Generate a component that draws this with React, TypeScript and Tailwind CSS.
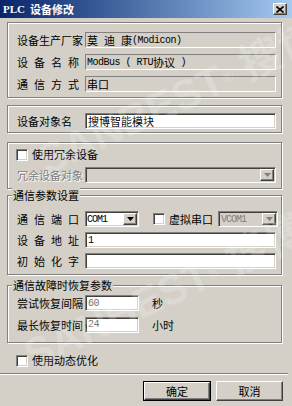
import React from "react";

const sunken =
  "border border-t-[#808080] border-l-[#808080] border-b-white border-r-white shadow-[inset_1px_1px_0_#404040,inset_-1px_-1px_0_#d4d0c8]";
const raised =
  "border border-t-white border-l-white border-b-[#404040] border-r-[#404040] shadow-[inset_-1px_-1px_0_#808080,inset_1px_1px_0_#d4d0c8] bg-[#d4d0c8]";
const mono = "font-['Liberation_Mono',monospace] text-[10px] tracking-[-0.5px]";

function Group({
  className,
  legend,
  children,
}: {
  className: string;
  legend?: string;
  children: React.ReactNode;
}) {
  return (
    <div
      className={`relative ml-[7px] w-[275px] border border-[#808080] shadow-[inset_1px_1px_0_#fff,1px_1px_0_#fff] ${className}`}
    >
      {legend && (
        <span className="absolute left-[4px] top-[-8px] bg-[#d4d0c8] px-[1px] leading-[14px]">
          {legend}
        </span>
      )}
      {children}
    </div>
  );
}

function Spaced({ text }: { text: string }) {
  return (
    <div className="flex w-[62px] justify-between leading-[16px]">
      {text.split("").map((c, i) => (
        <span key={i}>{c}</span>
      ))}
    </div>
  );
}

function Arrow({ disabled }: { disabled?: boolean }) {
  return (
    <div className={`flex h-[12px] w-[14px] items-center justify-center ${raised}`}>
      <svg width="7" height="4" viewBox="0 0 7 4">
        <path d="M0 0H7L3.5 4Z" fill={disabled ? "#808080" : "#000"} />
      </svg>
    </div>
  );
}

function Check({ className }: { className?: string }) {
  return <div className={`h-[12px] w-[12px] bg-white ${sunken} ${className ?? ""}`} />;
}

export default function App() {
  return (
    <div className="relative h-[406px] w-[292px] overflow-hidden bg-[#d4d0c8] font-['Noto_Sans_CJK_SC',sans-serif] text-[11px] text-black">
      {/* title bar */}
      <div className="flex h-[18px] items-center justify-between bg-gradient-to-r from-[#0a246a] to-[#a6caf0] pl-[3px] pr-[5px]">
        <div className="flex items-center font-bold text-white leading-[14px]">
          <span className="font-['Liberation_Serif',serif] text-[11px]">PLC</span>
          <span className="ml-[5px] text-[11px]">设备修改</span>
        </div>
        <div className={`flex h-[12px] w-[14px] items-center justify-center ${raised}`}>
          <svg width="8" height="7" viewBox="0 0 8 7">
            <path d="M0.5 0.5L7.5 6.5M7.5 0.5L0.5 6.5" stroke="#000" strokeWidth="1.7" />
          </svg>
        </div>
      </div>

      {/* group 1 */}
      <Group className="mt-[4px] h-[76px] pl-[9px] pt-[9px]">
        <div className="flex flex-col gap-[6px]">
          <div className="flex items-center">
            <span className="w-[68px] leading-[16px]">设备生产厂家</span>
            <div className="flex h-[16px] w-[191px] items-center border border-t-[#808080] border-l-[#808080] border-b-white border-r-white pl-[1px]">
              <span className="tracking-[6px]">莫迪</span>
              <span>康</span>
              <span className={mono}>(Modicon)</span>
            </div>
          </div>
          <div className="flex items-center">
            <div className="w-[68px]">
              <Spaced text="设备名称" />
            </div>
            <div className="flex h-[16px] w-[191px] items-center border border-t-[#808080] border-l-[#808080] border-b-white border-r-white pl-[1px]">
              <span className={`${mono} whitespace-pre`}>ModBus ( RTU</span>
              <span>协议</span>
              <span className={`${mono} whitespace-pre`}> )</span>
            </div>
          </div>
          <div className="flex items-center">
            <div className="w-[68px]">
              <Spaced text="通信方式" />
            </div>
            <div className="flex h-[16px] w-[191px] items-center border border-t-[#808080] border-l-[#808080] border-b-white border-r-white pl-[1px]">
              <span>串口</span>
            </div>
          </div>
        </div>
      </Group>

      {/* group 2 */}
      <Group className="mt-[7px] h-[28px] pl-[9px] pt-[7px]">
        <div className="flex items-center">
          <span className="w-[68px] leading-[16px]">设备对象名</span>
          <div className={`flex h-[16px] w-[191px] items-center bg-white pl-[2px] ${sunken}`}>
            <span>搜博智能模块</span>
          </div>
        </div>
      </Group>

      {/* group 3 */}
      <Group className="mt-[9px] h-[47px] pl-[8px] pt-[5px]">
        <div className="flex h-[13px] items-center">
          <Check />
          <span className="ml-[4px] leading-[13px]">使用冗余设备</span>
        </div>
        <div className="mt-[6px] flex items-center pl-[1px]">
          <span className="w-[68px] leading-[16px] text-[#808080] [text-shadow:1px_1px_0_#fff]">
            冗余设备对象
          </span>
          <div className={`flex h-[16px] w-[191px] items-center justify-end bg-[#d4d0c8] ${sunken} p-[1px]`}>
            <Arrow disabled />
          </div>
        </div>
      </Group>

      {/* group 4 */}
      <Group legend="通信参数设置" className="mt-[6px] h-[80px] pl-[9px] pt-[15px]">
        <div className="flex flex-col gap-[5px]">
          <div className="flex items-center">
            <div className="w-[68px]">
              <Spaced text="通信端口" />
            </div>
            <div className={`flex h-[16px] w-[54px] items-center justify-between bg-white pl-[1px] ${sunken} p-[1px]`}>
              <span className={`${mono} tracking-[-1px]`}>COM1</span>
              <Arrow />
            </div>
            <Check className="ml-[14px]" />
            <span className="ml-[4px] leading-[13px]">虚拟串口</span>
            <div className={`ml-[5px] flex h-[16px] w-[60px] items-center justify-between bg-[#d4d0c8] ${sunken} p-[1px]`}>
              <span className={`${mono} tracking-[-1px] pl-[1px] text-[#808080]`}>VCOM1</span>
              <Arrow disabled />
            </div>
          </div>
          <div className="flex items-center">
            <div className="w-[68px]">
              <Spaced text="设备地址" />
            </div>
            <div className={`flex h-[16px] w-[191px] items-center bg-white pl-[2px] ${sunken}`}>
              <span className={mono}>1</span>
            </div>
          </div>
          <div className="flex items-center">
            <div className="w-[68px]">
              <Spaced text="初始化字" />
            </div>
            <div className={`flex h-[16px] w-[191px] items-center bg-white pl-[2px] ${sunken}`} />
          </div>
        </div>
      </Group>

      {/* group 5 */}
      <Group legend="通信故障时恢复参数" className="mt-[10px] h-[58px] pl-[9px] pt-[9px]">
        <div className="flex flex-col gap-[5px]">
          <div className="flex items-center">
            <span className="w-[68px] leading-[16px]">尝试恢复间隔</span>
            <div className={`flex h-[16px] w-[54px] items-center bg-white pl-[2px] ${sunken}`}>
              <span className={`${mono} text-[#707070]`}>60</span>
            </div>
            <span className="ml-[13px]">秒</span>
          </div>
          <div className="flex items-center">
            <span className="w-[68px] leading-[16px]">最长恢复时间</span>
            <div className={`flex h-[16px] w-[54px] items-center bg-white pl-[2px] ${sunken}`}>
              <span className={`${mono} text-[#707070]`}>24</span>
            </div>
            <span className="ml-[13px]">小时</span>
          </div>
        </div>
      </Group>

      {/* dynamic optimisation */}
      <div className="ml-[16px] mt-[11px] flex h-[13px] items-center">
        <Check />
        <span className="ml-[4px] leading-[13px]">使用动态优化</span>
      </div>

      {/* separator */}
      <div className="mt-[6px] h-[2px] w-[288px] border-t border-t-[#808080] border-b border-b-white" />

      {/* buttons */}
      <div className="mt-[6px] flex justify-end gap-[5px] pr-[9px]">
        <div className="h-[20px] w-[68px] border border-black">
          <div className={`flex h-full w-full items-center justify-center ${raised}`}>
            <span className="leading-[14px]">确定</span>
          </div>
        </div>
        <div className={`flex h-[20px] w-[67px] items-center justify-center ${raised}`}>
          <span className="leading-[14px]">取消</span>
        </div>
      </div>

      {/* watermarks */}
      <div className="pointer-events-none absolute left-[30px] top-[140px] origin-top-left rotate-[-25deg] whitespace-nowrap font-['Liberation_Sans',sans-serif] text-[42px] font-bold leading-[42px] text-white/20">
        SANBEST<sup className="text-[14px]">®</sup> <span className="font-['Noto_Sans_CJK_SC',sans-serif]">搜博</span>
      </div>
      <div className="pointer-events-none absolute left-[16px] top-[335px] origin-top-left rotate-[-25deg] whitespace-nowrap font-['Liberation_Sans',sans-serif] text-[42px] font-bold leading-[42px] text-white/20">
        SANBEST<sup className="text-[14px]">®</sup> <span className="font-['Noto_Sans_CJK_SC',sans-serif]">搜博</span>
      </div>
    </div>
  );
}
